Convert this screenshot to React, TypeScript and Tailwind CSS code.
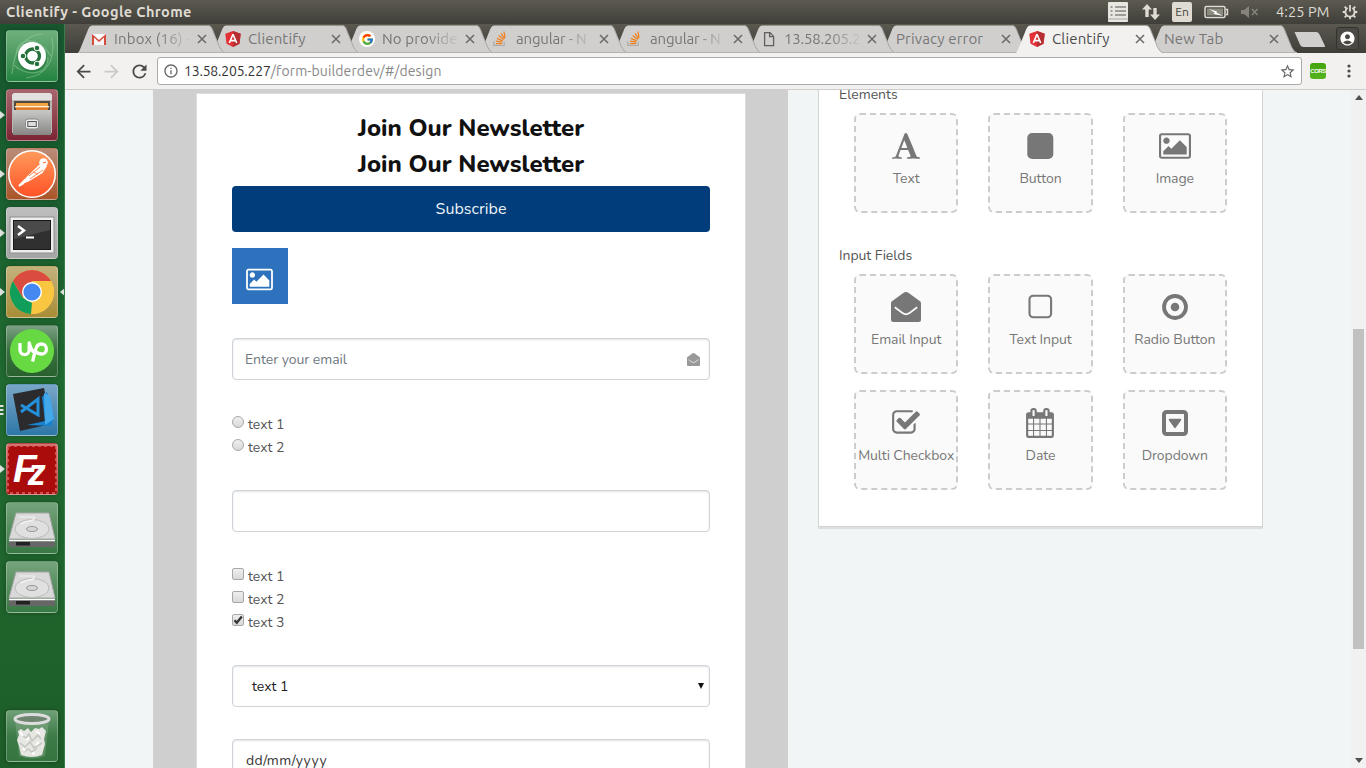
import React from "react";
import type { ReactNode } from "react";
import { MdArrowBack, MdArrowForward, MdRefresh, MdStarBorder, MdInfoOutline, MdAccountCircle } from "react-icons/md";
import { FcGoogle } from "react-icons/fc";

/* ---------- tab favicons ---------- */

const Gmail = () => (
  <svg viewBox="0 0 16 16" className="size-4">
    <path d="M1 3h14v11H1z" fill="#f4f4f4" />
    <path d="M1 3l7 6 7-6v11h-2V6.500L8 11 3 6.500V14H1z" fill="#d54c3f" />
    <path d="M3 3h10L8 7.500z" fill="#fff" />
  </svg>
);
const Angular = () => (
  <svg viewBox="0 0 16 16" className="size-4">
    <path d="M8 0l7.700 2.700-1.200 10L8 16l-6.500-3.300-1.200-10z" fill="#e23237" />
    <path d="M8 0l7.700 2.700-1.200 10L8 16z" fill="#b52e31" />
    <path d="M8 3.200L4.300 12M8 3.200L11.700 12M5.600 9.600h4.800" stroke="#fff" strokeWidth="1.600" fill="none" />
  </svg>
);
const Google = () => (
  <div className="flex size-4 items-center justify-center rounded-full bg-white">
    <FcGoogle size={13} />
  </div>
);
const StackOverflow = () => (
  <svg viewBox="0 0 16 16" className="size-4" fill="none">
    <path d="M.8 10.500V14.500h10.400v-4" stroke="#aaa" strokeWidth="1.200" />
    <path d="M2.800 12.500h6.300M3 10.100l6.200 1M3.900 7.400l5.800 2.500M5.700 4.500l5 4M8 2.300l3.700 5.300M10.900 .5l1.200 6.200" stroke="#f0801f" strokeWidth="1.250" />
  </svg>
);
const Page = () => (
  <svg viewBox="0 0 16 16" className="size-4" fill="none" stroke="#5f5f5f" strokeWidth="1.300">
    <path d="M3.600 1.600h5.400l3.600 3.800v9.200h-9zM8.600 1.600v4h4" />
  </svg>
);

const tabs: { title: string; icon?: ReactNode; active?: boolean; fade?: boolean; z: string }[] = [
  { title: "Inbox (16) -", icon: <Gmail />, fade: true, z: "z-[9]" },
  { title: "Clientify", icon: <Angular />, z: "z-[8]" },
  { title: "No provide", icon: <Google />, fade: true, z: "z-[7]" },
  { title: "angular - N", icon: <StackOverflow />, fade: true, z: "z-[6]" },
  { title: "angular - N", icon: <StackOverflow />, fade: true, z: "z-[5]" },
  { title: "13.58.205.2", icon: <Page />, fade: true, z: "z-[4]" },
  { title: "Privacy error", z: "z-[3]" },
  { title: "Clientify", icon: <Angular />, active: true, z: "z-20" },
  { title: "New Tab", z: "z-[1]" },
];

function Tab({ title, icon, active, fade, z }: (typeof tabs)[number]) {
  return (
    <div className={`relative flex h-7 w-[134px] shrink-0 items-center ${z}`}>
      <svg className="absolute top-0 -left-[14px] h-7 w-[150px]" viewBox="0 0 150 28">
        <path d="M1 28Q2.500 26 4 22L11.500 3.500Q13 .5 15 .5H131.500Q133.500 .5 135 3.500L142.500 22Q145 27 148 28z" fill={active ? "#f2f1f0" : "#d0cfce"} />
        <path d="M131.500 .5Q133.500 .5 135 3.500L142.500 22Q145 27 148 28" fill="none" stroke="#a9a8a5" />
        {!active && <path d="M1 27.500H148" stroke="#b5b3b0" />}
      </svg>
      <div className="relative flex w-full items-center">
        {icon && <span className="mr-[6px] w-4">{icon}</span>}
        <span
          className={`text-[15px] leading-5 whitespace-nowrap ${icon ? "w-[76px] pl-px" : "w-[98px] pl-px"} ${active ? "text-[#4c4c4c]" : "text-[#777675]"} ${title.startsWith("13") || title.startsWith("angular") ? "tracking-[-0.2px]" : "tracking-[0.15px]"} ${fade ? "[mask-image:linear-gradient(to_right,#000_60%,transparent_105%)]" : ""}`}
        >
          {title}
        </span>
        <svg viewBox="0 0 10 10" className="ml-[8px] size-[10px]" stroke="#6a6967" strokeWidth="1.500">
          <path d="M1 1l8 8M9 1L1 9" />
        </svg>
      </div>
    </div>
  );
}

/* ---------- desktop panel ---------- */

function TopPanel() {
  return (
    <header className="flex h-6 shrink-0 items-center bg-linear-to-b from-[#5c5a50] to-[#3f3e39] pr-2 pl-[6px] text-[#dfdbd2]">
      <h1 className="text-[14.5px] font-bold tracking-[0.4px]">Clientify - Google Chrome</h1>
      <div className="ml-auto flex items-center">
        <svg viewBox="0 0 20 20" className="mr-[14px] size-5">
          <rect width="20" height="20" rx="1" fill="#e8e6e0" />
          <path d="M7 5h11M7 9h11M7 13h11M2.500 5h2M2.500 9h2M2.500 13h2" stroke="#55534c" strokeWidth="1.200" />
          <path d="M0 17h20" stroke="#aaa" />
        </svg>
        <svg viewBox="0 0 18 18" className="mr-3 size-[18px]" fill="#dfdbd2">
          <path d="M5 1l5 5.500H6.700V14H3.300V6.500H0zM13 17l-5-5.500h3.300V5h3.400v6.500H18z" />
        </svg>
        <span className="mr-3 flex h-5 w-5 items-center justify-center rounded-xs bg-[#dfdbd2] text-[12px] text-[#44423c]">En</span>
        <svg viewBox="0 0 25 14" className="mr-3 h-[14px] w-[25px]">
          <rect x="1" y="1.500" width="20" height="11" rx="1.500" fill="none" stroke="#dfdbd2" strokeWidth="1.500" />
          <rect x="3" y="3.500" width="16" height="7" fill="#8c897f" />
          <path d="M22 4.500h1.500v5H22" fill="none" stroke="#dfdbd2" strokeWidth="1.400" />
          <path d="M5 4l8 2.500-.5 1L19 11l-9-2 .5-1.500z" fill="#fff" />
        </svg>
        <svg viewBox="0 0 18 12" className="mr-[17px] h-3 w-[18px]" fill="#85837b">
          <path d="M0 4h3l5-4v12L3 8H0z" />
          <path d="M11 3l5.500 6M16.500 3L11 9" stroke="#85837b" strokeWidth="1.500" />
        </svg>
        <span className="mr-[13px] w-[53px] text-[14.5px] tracking-[0.1px] whitespace-nowrap">4:25 PM</span>
        <svg viewBox="0 0 18 18" className="size-4" fill="none" stroke="#dfdbd2">
          <path d="M6.300 4.600a5.200 5.200 0 1 0 5.400 0" strokeWidth="2" />
          <path d="M9 1v7.500" strokeWidth="2" />
          <path d="M3 3l2 2M15 3l-2 2M.8 9h2.500M17.200 9h-2.500M3 15l2-2M15 15l-2-2M9 17.200v-2.500" strokeWidth="2" />
        </svg>
      </div>
    </header>
  );
}

/* ---------- launcher ---------- */

const DashArt = () => (
  <>
    <path d="M6 44C8 14 24 4 37 4M46 8C50 30 40 46 20 48M10 26C10 8 30 4 45 26M42 27C43 46 20 47 8 35" stroke="#a9dab4" strokeOpacity=".4" strokeWidth="1.200" fill="none" />
    <circle cx="26" cy="27" r="15" fill="#175927" opacity=".25" />
    <circle cx="26" cy="26" r="14" fill="#fff" />
    <circle cx="26.500" cy="26" r="7" fill="none" stroke="#26713b" strokeWidth="3.300" />
    <g fill="#26713b" stroke="#fff" strokeWidth="1">
      <circle cx="17" cy="26" r="2.800" />
      <circle cx="31" cy="18" r="2.800" />
      <circle cx="31" cy="34" r="2.800" />
    </g>
  </>
);
const FilesArt = () => (
  <>
    <path d="M6 6l2-2h36l2 2v38H6z" fill="#b8b7b5" />
    <path d="M6 6l2-2h36l2 2v5H6z" fill="#e2e1df" />
    <path d="M8 12h36v13H8z" fill="#54493f" />
    <path d="M10 14h32v9H10z" fill="#f3a645" />
    <path d="M9 17h34v1.500H9z" fill="#fff1d5" />
    <path d="M10 18.500h32v3H10z" fill="#de7b2d" />
    <path d="M7 21h38v25H7z" fill="url(#metal)" />
    <rect x="19.500" y="30" width="13" height="10" rx="2.500" fill="#eee" stroke="#888" />
    <rect x="21.800" y="32.500" width="8.500" height="5" fill="#ddd" stroke="#555" />
  </>
);
const PostmanArt = () => (
  <>
    <circle cx="26" cy="26" r="23.300" fill="url(#orange)" stroke="#fff" strokeWidth="1.500" />
    <circle cx="37.500" cy="14.500" r="4.300" fill="#fff" />
    <path d="M33 17L20.500 29l-4 7 7-3 13-8 4.500-7z" fill="#fff" />
    <path d="M23 28l11-9M24 31l13-9M27 24l5 2" stroke="#ff7a40" strokeWidth=".9" />
    <path d="M20 31l-7 7 5-3" fill="none" stroke="#fff" strokeWidth="2" />
    <path d="M37 15l3-1" stroke="#ff6c37" />
  </>
);
const TerminalArt = () => (
  <>
    <rect x="4" y="10" width="44" height="36" fill="#eee" stroke="#8d8d8d" />
    <rect x="7.500" y="13.500" width="37" height="29" fill="#2f302f" stroke="#171817" />
    <path d="M8 14h36v9L8 32z" fill="#fff" opacity=".13" />
    <path d="M12 19l6 4.500-6 4.500" fill="none" stroke="#fff" strokeWidth="2.500" />
    <path d="M20 30.500h8" stroke="#fff" strokeWidth="2" />
  </>
);
const ChromeArt = () => (
  <>
    <circle cx="26" cy="26" r="22" fill="#f9c642" />
    <path d="M6.900 15A22 22 0 0 1 45 15H26L16.500 31.500z" fill="#db4c40" />
    <path d="M6.900 15l9.600 16.500L26 37l-1 11A22 22 0 0 1 6.900 15z" fill="#119e5a" />
    <path d="M35.500 31.500L25 48a22 22 0 0 0 20-33H26z" fill="#f9c642" />
    <circle cx="26" cy="26" r="10" fill="#fff" />
    <circle cx="26" cy="26" r="8.600" fill="#4688f2" />
  </>
);
const UpworkArt = () => (
  <>
    <circle cx="26" cy="26" r="22" fill="#66d943" />
    <path d="M14 18v7a4.600 4.600 0 0 0 9.200 0v-7c1.500 6 3.500 9 6.500 10.500M26.500 36.500l3-11.500c1-4.500 3.500-6 6-6a4.700 4.700 0 0 1 0 10c-3 0-4.500-1-6-2.500" fill="none" stroke="#fff" strokeWidth="3.300" strokeLinejoin="round" />
  </>
);
const CodeArt = () => (
  <>
    <path d="M7 10l31-6 7 36-31 7z" fill="#2b2b2e" />
    <path d="M36 13l5-5 7 26-3 8-24-1 18-4z" fill="#1682d0" />
    <path d="M38 9l6 3 4 23-9 6z" fill="#43a9eb" />
    <path d="M15 21l17 10V15L15 28" fill="none" stroke="#2490dc" strokeWidth="3" />
  </>
);
const FileZillaArt = () => (
  <>
    <rect x="2" y="3" width="48" height="47" fill="#aa0c0c" stroke="#d66" strokeWidth="1.500" strokeDasharray="3 3" />
    <text x="7" y="39" fontFamily="Liberation Sans" fontSize="39" fontWeight="bold" fontStyle="italic" fill="#fff">
      F<tspan dx="-9" dy="3" fontSize="36">z</tspan>
    </text>
  </>
);
const DriveArt = () => (
  <>
    <path d="M10 11h33l6 26H3z" fill="#d9d9d9" stroke="#a6a6a6" />
    <path d="M3 38h46v7H3z" fill="#666" />
    <path d="M3 38.500h46" stroke="#fff" strokeWidth="1.500" />
    <path d="M10 40h14v3.500H10z" fill="#222" />
    <ellipse cx="26" cy="27" rx="17" ry="9.500" fill="#e0e0e0" stroke="#bcbcbc" />
    <ellipse cx="26" cy="27" rx="5.500" ry="2.500" fill="#d6d6d6" stroke="#999" />
    <path d="M13 15h15c2 5-8 3-13 7" fill="none" stroke="#f4f4f4" strokeWidth="1.200" />
  </>
);
const TrashArt = () => (
  <>
    <path d="M9 10l4 36q13 5 26 0l4-36z" fill="#9fba9f" opacity=".35" />
    <path d="M12 21l3-2 3 2 4-3 3 4 4-4 4 1 3-2 4 4-2 8 1 5-3 11q-10 4-21 0l-2-9-2-6 2-5z" fill="#e6e6e2" />
    <path d="M16 25l4 3 3-4 3 7 6-6 3 4M14 33l5 4 5-5 4 6 8-5M18 42l4-3 4 3 5-4" fill="none" stroke="#c4c6c1" strokeWidth="1.500" />
    <path d="M14 22l3 4M30 21l4 3M20 30l3-2M30 35l3-3M17 38l2 3M26 43l3 1" stroke="#fff" strokeWidth="2" />
    <ellipse cx="26" cy="9" rx="17" ry="4.500" fill="#6f8570" stroke="#dcdcdc" strokeWidth="3" />
  </>
);

const apps: { name: string; art: ReactNode; tone: string; mark?: "one" | "many"; focused?: boolean }[] = [
  { name: "dash", art: <DashArt />, tone: "from-[#6fb07e] to-[#218440]" },
  { name: "files", art: <FilesArt />, tone: "from-[#a8656d] to-[#7c2535]", mark: "one" },
  { name: "postman", art: <PostmanArt />, tone: "from-[#b98c78] to-[#a95527]", mark: "one" },
  { name: "terminal", art: <TerminalArt />, tone: "from-[#bebebe] to-[#a4a6a4]", mark: "one" },
  { name: "chrome", art: <ChromeArt />, tone: "from-[#c2b27c] to-[#a88d35]", mark: "one", focused: true },
  { name: "upwork", art: <UpworkArt />, tone: "from-[#7ba083] via-[#39703f] to-[#28602e]" },
  { name: "code", art: <CodeArt />, tone: "from-[#78a7c6] to-[#2c77a8]", mark: "many" },
  { name: "filezilla", art: <FileZillaArt />, tone: "from-[#d47373] to-[#970909]", mark: "one" },
  { name: "drive-a", art: <DriveArt />, tone: "from-[#75a47b] to-[#377844]" },
  { name: "drive-b", art: <DriveArt />, tone: "from-[#75a47b] to-[#377844]" },
];

function Tile({ art, tone, mark, focused }: { art: ReactNode; tone: string; mark?: string; focused?: boolean }) {
  return (
    <div className="flex h-[52px] w-[65px] items-center">
      <svg viewBox="0 0 6 14" className="h-[14px] w-[6px]" fill="#dfe3df">
        {mark === "one" && <path d="M0 3l5 4-5 4z" />}
        {mark === "many" && <path d="M0 2h3l1 1-1 1H0zM0 6h3l1 1-1 1H0zM0 10h3l1 1-1 1H0z" />}
      </svg>
      <div className={`size-[52px] rounded-[4px] border border-white/25 bg-linear-to-b shadow-[0_0_5px_rgba(0,0,0,.3)] ${tone}`}>
        <svg viewBox="0 0 52 52" className="-m-px size-[52px]">{art}</svg>
      </div>
      {focused && (
        <svg viewBox="0 0 6 10" className="ml-px h-[10px] w-[6px]" fill="#dfe3df">
          <path d="M6 1L1 5l5 4z" />
        </svg>
      )}
    </div>
  );
}

function Launcher() {
  return (
    <nav className="flex w-[65px] shrink-0 flex-col justify-between overflow-hidden border-r border-[#3b7c4a] bg-linear-to-b from-[#17582f] via-[#206b31] to-[#1e5e28] pt-[6px] pb-[6px]">
      <svg className="absolute size-0">
        <defs>
          <linearGradient id="metal" x2="0" y2="1"><stop stopColor="#c9c9c7" /><stop offset="1" stopColor="#868684" /></linearGradient>
          <linearGradient id="orange" x2="0" y2="1"><stop stopColor="#ff9b5b" /><stop offset="1" stopColor="#ff5226" /></linearGradient>
        </defs>
      </svg>
      <div className="flex flex-col gap-[7px]">
        {apps.map((a) => <Tile key={a.name} art={a.art} tone={a.tone} mark={a.mark} focused={a.focused} />)}
      </div>
      <Tile art={<TrashArt />} tone="from-[#6f9f77] via-[#3d7b48] to-[#35753f]" />
    </nav>
  );
}

/* ---------- form builder icons ---------- */

const PictureIcon = ({ className }: { className: string }) => (
  <svg viewBox="-64 0 1920 1792" className={className} fill="currentColor">
    <path d="M576 576q0 80-56 136t-136 56-136-56-56-136 56-136 136-56 136 56 56 136zm1024 384v448h-1408v-192l320-320 160 160 512-512zm96-704h-1600q-13 0-22.500 9.500t-9.500 22.500v1216q0 13 9.500 22.500t22.500 9.500h1600q13 0 22.500-9.500t9.500-22.500v-1216q0-13-9.500-22.500t-22.500-9.500zm160 32v1216q0 66-47 113t-113 47h-1600q-66 0-113-47t-47-113v-1216q0-66 47-113t113-47h1600q66 0 113 47t47 113z" />
  </svg>
);
const EnvelopeOpen = ({ className }: { className: string }) => (
  <svg viewBox="0 0 30 30" className={className}>
    <path d="M0 11.300Q0 10 1 9.200L12.300 1Q15-.9 17.700 1L29 9.200Q30 10 30 11.300V27.500Q30 30 27.500 30H2.500Q0 30 0 27.500z" fill="currentColor" />
    <path d="M3.800 15.300l7.700 5.700q3.500 2.600 7 0l7.700-5.700" fill="none" stroke="#fafafa" strokeWidth="1.700" />
  </svg>
);
const FontIcon = () => (
  <svg viewBox="0 0 1664 1792" className="h-[30px] w-7" fill="currentColor">
    <path d="M725 559l-170 450q33 0 136.500 2t160.500 2q19 0 57-2-87-253-184-452zm-725 1105l2-79q23-7 56-12.500t57-10.500 49.500-14.500 44.500-29 31-50.500l237-616 280-724h128q8 14 11 21l205 480q33 78 106 257.500t114 274.500q15 34 58 144.500t72 168.500q20 45 35 57 19 15 88 29.500t84 20.500q6 38 6 57 0 4-.5 13t-.5 13q-63 0-190-8t-191-8q-76 0-215 7t-178 8q0-43 4-78l131-28q1 0 12.500-2.500t15.500-3.500 14.500-4.500 15-6.500 11-8 9-11 2.500-14q0-16-31-96.500t-72-177.500-42-100l-450-2q-26 58-76.500 195.500t-50.500 162.500q0 22 14 37.500t43.500 24.500 48.500 13.500 57 8.500 41 4q1 19 1 58 0 9-2 27-58 0-174.500-10t-174.500-10q-8 0-26.500 4t-21.500 4q-80 14-188 14z" />
  </svg>
);
const CheckSquare = () => (
  <svg viewBox="0 0 1792 1792" className="size-[30px]" fill="currentColor">
    <path d="M1472 930v318q0 119-84.500 203.500t-203.500 84.500h-832q-119 0-203.500-84.500t-84.500-203.500v-832q0-119 84.500-203.500t203.500-84.500h832q63 0 117 25 15 7 18 23 3 17-9 29l-49 49q-10 10-23 10-3 0-9-2-23-6-45-6h-832q-66 0-113 47t-47 113v832q0 66 47 113t113 47h832q66 0 113-47t47-113v-254q0-13 9-22l64-64q10-10 23-10 6 0 12 3 20 8 20 29zm231-489l-814 814q-24 24-57 24t-57-24l-430-430q-24-24-24-57t24-57l110-110q24-24 57-24t57 24l263 263 647-647q24-24 57-24t57 24l110 110q24 24 24 57t-24 57z" />
  </svg>
);
const Calendar = () => (
  <svg viewBox="0 0 1792 1792" className="size-[30px]" fill="currentColor">
    <path d="M192 1664h288v-288h-288v288zm352 0h320v-288h-320v288zm-352-352h288v-320h-288v320zm352 0h320v-320h-320v320zm-352-384h288v-288h-288v288zm736 736h320v-288h-320v288zm-384-736h320v-288h-320v288zm768 736h288v-288h-288v288zm-384-352h320v-320h-320v320zm-352-864v-288q0-13-9.500-22.500t-22.500-9.500h-64q-13 0-22.500 9.500t-9.500 22.500v288q0 13 9.500 22.500t22.500 9.500h64q13 0 22.500-9.500t9.500-22.500zm736 864h288v-320h-288v320zm-384-384h320v-288h-320v288zm384 0h288v-288h-288v288zm32-480v-288q0-13-9.500-22.500t-22.500-9.500h-64q-13 0-22.500 9.500t-9.500 22.500v288q0 13 9.500 22.500t22.500 9.500h64q13 0 22.500-9.500t9.500-22.500zm384-64v1280q0 52-38 90t-90 38h-1408q-52 0-90-38t-38-90v-1280q0-52 38-90t90-38h128v-96q0-66 47-113t113-47h64q66 0 113 47t47 113v96h384v-96q0-66 47-113t113-47h64q66 0 113 47t47 113v96h128q52 0 90 38t38 90z" />
  </svg>
);
const Glyph = ({ children }: { children: ReactNode }) => (
  <svg viewBox="0 0 30 30" className="size-[30px]" fill="currentColor">{children}</svg>
);

const elements = [
  { label: "Text", icon: <FontIcon /> },
  { label: "Button", icon: <Glyph><rect x="2.300" y="2" width="26" height="26" rx="4.800" /></Glyph> },
  { label: "Image", icon: <PictureIcon className="h-[30px] w-8" /> },
];
const inputs = [
  { label: "Email Input", icon: <EnvelopeOpen className="size-[30px]" /> },
  { label: "Text Input", icon: <Glyph><rect x="4.500" y="3.700" width="21.600" height="21.600" rx="3.800" fill="none" stroke="currentColor" strokeWidth="2.100" /></Glyph> },
  { label: "Radio Button", icon: <Glyph><circle cx="15" cy="15" r="11" fill="none" stroke="currentColor" strokeWidth="3.800" /><circle cx="15" cy="15" r="4.300" /></Glyph> },
  { label: "Multi Checkbox", icon: <CheckSquare /> },
  { label: "Date", icon: <Calendar /> },
  { label: "Dropdown", icon: <Glyph><rect x="4" y="4" width="22" height="22" rx="2.500" fill="none" stroke="currentColor" strokeWidth="4" /><path d="M9.600 10.700h10.800q1.400 0 .7 1.500l-5.200 7.400q-.9 1.100-1.800 0l-5.200-7.400q-.7-1.500.7-1.500z" /></Glyph> },
];

function Palette({ items }: { items: { label: string; icon: ReactNode }[] }) {
  return (
    <div className="grid grid-cols-3 gap-y-4">
      {items.map((i) => (
        <div key={i.label} className="px-[15px]">
          <div className="flex h-[100px] flex-col items-center rounded-[6px] border-2 border-dashed border-[#ccc] bg-[#fafafa] pt-4 text-[#777]">
            {i.icon}
            <span className="mt-[7px] text-[14px] leading-[21px] tracking-[-0.08px] whitespace-nowrap">{i.label}</span>
          </div>
        </div>
      ))}
    </div>
  );
}

const field = "flex h-[42px] shrink-0 items-center rounded-[4px] border border-[#ced4da] bg-white shadow-[inset_0_1px_2px_rgba(0,0,0,.12)]";

function Choice({ label, radio, checked }: { label: string; radio?: boolean; checked?: boolean }) {
  return (
    <div className="flex h-[23px] items-center text-[14px] text-[#555]">
      <span className={`-mt-[5px] mr-1 flex size-3 items-center justify-center border border-[#a8a8a8] bg-linear-to-b from-[#efefef] to-[#d9d9d9] ${radio ? "rounded-full" : "rounded-[2px]"}`}>
        {checked && (
          <svg viewBox="0 0 10 10" className="size-[10px]" fill="none" stroke="#333" strokeWidth="2.300"><path d="M1.500 5.200l2.300 2.600L8.800 1.500" /></svg>
        )}
      </span>
      {label}
    </div>
  );
}

function FormPreview() {
  return (
    <section className="ml-[88px] w-[635px] shrink-0 bg-[#cfcfcf] px-[43px] pt-[3px]">
      <div className="flex h-[700px] w-[550px] flex-col border border-[#ddd] bg-white px-[35px] pt-4">
        <h2 className="text-center text-[24px] leading-9 font-extrabold text-[#111]">Join Our Newsletter</h2>
        <h2 className="text-center text-[24px] leading-9 font-extrabold text-[#111]">Join Our Newsletter</h2>
        <button className="mt-1 h-[46px] shrink-0 rounded-[4px] bg-[#003d7a] text-[16px] tracking-[0.05px] text-[#eef3f8]">Subscribe</button>
        <div className="mt-4 flex size-14 shrink-0 items-center justify-center bg-[#2e72bd] pt-[7px] pr-[2px] text-white">
          <PictureIcon className="h-[25px] w-[27px]" />
        </div>
        <div className={`mt-[34px] justify-between pr-[9px] pl-3 text-[14px] tracking-[-0.05px] text-[#6f7881] ${field}`}>
          Enter your email
          <EnvelopeOpen className="size-[13px] text-[#999]" />
        </div>
        <div className="mt-[33px] flex flex-col">
          <Choice label="text 1" radio />
          <Choice label="text 2" radio />
        </div>
        <div className={`mt-[31px] ${field}`} />
        <div className="mt-[33px] flex flex-col">
          <Choice label="text 1" />
          <Choice label="text 2" />
          <Choice label="text 3" checked />
        </div>
        <div className={`mt-[31px] justify-between pr-[5px] pl-[19px] text-[14px] text-[#222] ${field}`}>
          text 1
          <svg viewBox="0 0 6 6" className="size-[6px]"><path d="M0 0h6L3 6z" fill="#111" /></svg>
        </div>
        <div className={`mt-8 pl-[13px] text-[14px] tracking-[0.45px] text-[#333] ${field}`}>dd/mm/yyyy</div>
      </div>
    </section>
  );
}

/* ---------- browser ---------- */

function Browser() {
  return (
    <div className="flex min-w-0 flex-1 flex-col">
      <div className="flex h-[29px] shrink-0 items-start bg-linear-to-b from-[#5a584f] to-[#3f3e39] pt-px pl-[26px]">
        {tabs.map((t, i) => <Tab key={i} {...t} />)}
        <svg viewBox="0 0 34 16" className="mt-[7px] -ml-[4px] h-4 w-[34px] shrink-0">
          <path d="M1.500 0h22q2 0 3 2.500l5.500 11.500q.6 1-1 1h-20.500q-2.500 0-3.300-2z" fill="#d0cfce" />
        </svg>
        <div className="mt-[2px] ml-[9px] flex size-[23px] items-center justify-center rounded-[3px] border border-[#34332f] bg-[#4b4943] text-white">
          <MdAccountCircle size={17} />
        </div>
      </div>
      <div className="flex h-[37px] shrink-0 items-center border-b border-[#cfcdcb] bg-[#f2f1f0] pl-2">
        <MdArrowBack size={21} className="text-[#4a4a4a]" />
        <MdArrowForward size={21} className="ml-[7px] text-[#cbcac9]" />
        <MdRefresh size={21} className="ml-[7px] text-[#4a4a4a]" />
        <div className="ml-[7px] flex h-7 w-[1145px] shrink-0 items-center rounded-[3px] border border-[#acaaa8] bg-white pr-[5px] pl-[5px]">
          <MdInfoOutline size={16} className="text-[#666]" />
          <span className="ml-[5px] text-[14px] tracking-[-0.2px] text-[#333]">
            13.58.205.227<span className="tracking-[0.12px] text-[#888]">/form-builderdev/#/design</span>
          </span>
          <MdStarBorder size={17} className="ml-auto text-[#666]" />
        </div>
        <span className="ml-2 flex size-4 items-center justify-center rounded-[3px] bg-linear-to-b from-[#43a50c] to-[#55b41d] font-['Liberation_Sans'] text-[6px] font-bold tracking-[-0.5px] text-white">CORS</span>
        <svg viewBox="0 0 4 16" className="ml-[21px] h-4 w-1" fill="#4a4a4a">
          <circle cx="2" cy="3" r="1.600" /><circle cx="2" cy="8" r="1.600" /><circle cx="2" cy="13" r="1.600" />
        </svg>
      </div>
      <div className="flex min-h-0 flex-1 bg-[#f1f5f6]">
        <main className="flex min-w-0 flex-1 items-start overflow-hidden font-['Nunito','Lato',sans-serif]">
          <FormPreview />
          <aside className="ml-[30px] h-[437px] w-[445px] shrink-0 border-x border-b border-[#d2d4d5] bg-white px-5 shadow-[0_2px_0_#dcdedf]">
            <h3 className="-mt-[6px] mb-[8px] h-[21px] text-[14px] leading-[21px] text-[#555]">Elements</h3>
            <Palette items={elements} />
            <h3 className="mt-8 mb-[8px] h-[21px] text-[14px] leading-[21px] tracking-[-0.05px] text-[#555]">Input Fields</h3>
            <Palette items={inputs} />
          </aside>
        </main>
        <div className="flex w-[15px] shrink-0 flex-col items-center bg-[#f1f1f1] py-[5px]">
          <svg viewBox="0 0 8 5" className="h-[5px] w-2"><path d="M0 5l4-5 4 5z" fill="#505050" /></svg>
          <div className="mt-[229px] h-[320px] w-[11px] bg-[#c1c1c1]" />
          <svg viewBox="0 0 8 5" className="mt-auto h-[5px] w-2"><path d="M0 0l4 5 4-5z" fill="#505050" /></svg>
        </div>
      </div>
    </div>
  );
}

export default function App() {
  return (
    <div className="flex h-[768px] w-[1366px] flex-col overflow-hidden font-['Ubuntu','Open_Sans',sans-serif]">
      <TopPanel />
      <div className="flex min-h-0 flex-1">
        <Launcher />
        <Browser />
      </div>
    </div>
  );
}
